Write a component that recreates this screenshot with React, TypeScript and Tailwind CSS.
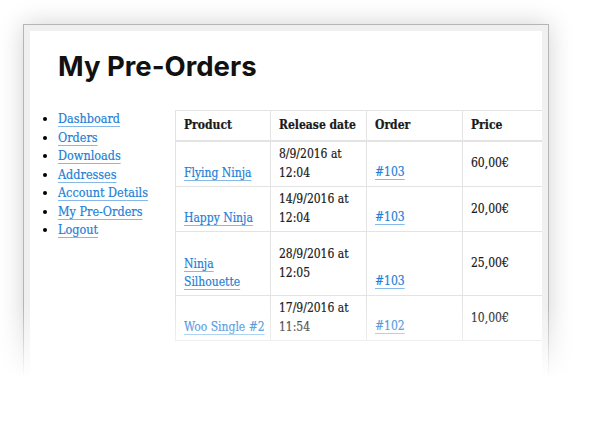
import React from "react";

type Row = {
    product: string[];
    date: [string, string];
    order: string;
    price: string;
    height: string;
};

const rows: Row[] = [
    { product: ["Flying Ninja"], date: ["8/9/2016 at", "12:04"], order: "#103", price: "60,00€", height: "h-[46px]" },
    { product: ["Happy Ninja"], date: ["14/9/2016 at", "12:04"], order: "#103", price: "20,00€", height: "h-[45px]" },
    { product: ["Ninja", "Silhouette"], date: ["28/9/2016 at", "12:05"], order: "#103", price: "25,00€", height: "h-[64px]" },
    { product: ["Woo Single #2"], date: ["17/9/2016 at", "11:54"], order: "#102", price: "10,00€", height: "h-[45px]" },
];

const menu = ["Dashboard", "Orders", "Downloads", "Addresses", "Account Details", "My Pre-Orders", "Logout"];

const serif = "font-['DejaVu_Serif_Condensed','DejaVu_Serif',serif] [-webkit-text-stroke:0.2px]";
const link = "text-[#1f7fd6] underline decoration-[#86b9ea] decoration-1 underline-offset-[3px]";

export default function App() {
    return (
        <div className="relative w-[600px] h-[435px] bg-white overflow-hidden">
            <div className="ml-[23px] mt-[24px] w-[526px] h-[380px] border border-[#b5b5b5] bg-[#f0f0f0] p-[6px] shadow-[0_0_24px_rgba(0,0,0,0.18)]">
                <div className="h-full bg-white overflow-hidden pl-[28px] pt-[21px]">
                    <h1 className="text-[27.5px] leading-[28px] font-bold text-[#111] font-['Inter',sans-serif]">
                        My Pre-Orders
                    </h1>
                    <div className="flex mt-[30px]">
                        <ul className={`w-[117px] shrink-0 list-disc pl-0 ml-0 text-[12.5px] leading-[18.5px] ${serif}`}>
                            {menu.map((m) => (
                                <li key={m} className="marker:text-black">
                                    <span className={link}>{m}</span>
                                </li>
                            ))}
                        </ul>
                        <table className={`table-fixed w-[367px] shrink-0 border-collapse text-[12px] leading-[19px] text-[#1a1a1a] ${serif}`}>
                            <colgroup>
                                <col className="w-[95px]" />
                                <col className="w-[96px]" />
                                <col className="w-[96px]" />
                                <col className="w-[80px]" />
                            </colgroup>
                            <thead>
                                <tr className="h-[30px]">
                                    {["Product", "Release date", "Order", "Price"].map((h) => (
                                        <th key={h} className="border border-[#e3e3e3] border-b-2 text-left font-bold px-[8px] align-middle whitespace-nowrap">
                                            {h}
                                        </th>
                                    ))}
                                </tr>
                            </thead>
                            <tbody>
                                {rows.map((r) => (
                                    <tr key={r.date[0]} className={r.height}>
                                        <td className="border border-[#e3e3e3] px-[8px] pb-[4px] align-bottom whitespace-nowrap">
                                            {r.product.map((p) => (
                                                <div key={p} className="leading-[18px]">
                                                    <span className={link}>{p}</span>
                                                </div>
                                            ))}
                                        </td>
                                        <td className="border border-[#e3e3e3] px-[8px] align-middle whitespace-nowrap">
                                            <div>{r.date[0]}</div>
                                            <div>{r.date[1]}</div>
                                        </td>
                                        <td className="border border-[#e3e3e3] px-[8px] pb-[4px] align-bottom">
                                            <span className={link}>{r.order}</span>
                                        </td>
                                        <td className="border border-[#e3e3e3] px-[8px] align-middle">{r.price}</td>
                                    </tr>
                                ))}
                            </tbody>
                        </table>
                    </div>
                </div>
            </div>
            <div className="absolute left-0 right-0 top-[306px] h-[72px] bg-gradient-to-b from-white/0 via-white/45 to-white" />
            <div className="absolute left-0 right-0 top-[378px] bottom-0 bg-white" />
        </div>
    );
}
